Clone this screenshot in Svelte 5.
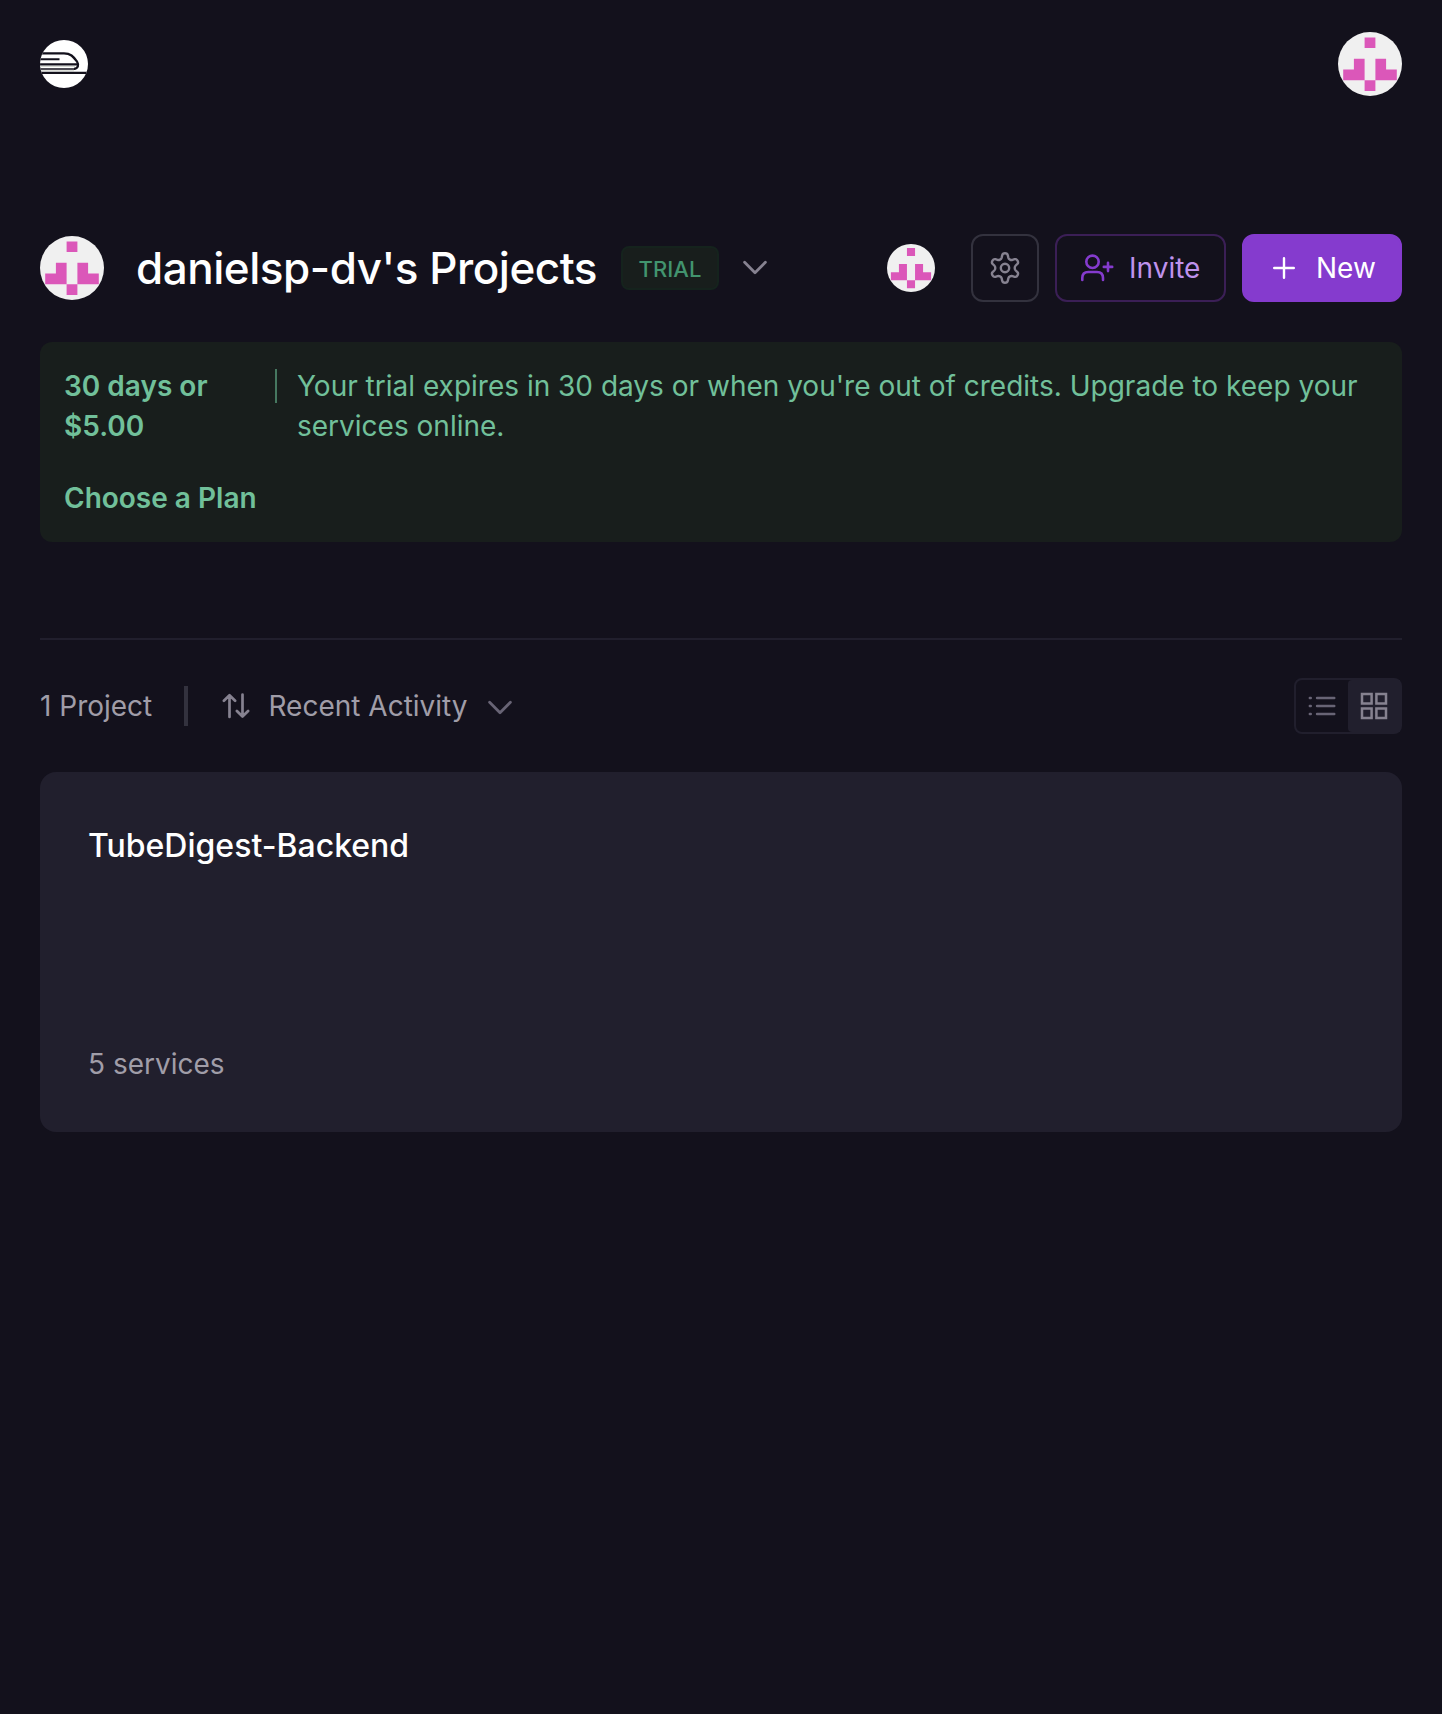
<svelte:options runes={true} />

{#snippet identicon(size)}
  <svg class="avatar {size}" viewBox="0 0 64 64">
    <rect width="64" height="64" fill="#f0f0f0" />
    <path
      fill="#db57b9"
      d="M26.600 5.400H37.400V16.100H26.600ZM15.900 26.800H26.600V48.200H5.200V37.500H15.900ZM37.400 26.800H48.100V37.500H58.800V48.200H37.400ZM26.600 48.200H37.400V58.900H26.600Z"
    />
  </svg>
{/snippet}

<div class="page">
  <header>
    <svg class="logo" viewBox="0 0 48 48">
      <defs><clipPath id="disc"><circle cx="24" cy="24" r="24" /></clipPath></defs>
      <g clip-path="url(#disc)" fill="none" stroke="#13111c">
        <rect width="48" height="48" fill="#fff" stroke="none" />
        <path d="M0 26.500H35M0 30.700H34" stroke="#d5d9d2" stroke-width="1" />
        <path d="M0 13.300H24C31 13.300 33.500 17 37 21.500C39.200 25 38 28.800 34 28.800" stroke-width="2.300" />
        <path d="M0 19.300H19.500" stroke-width="2" />
        <path d="M0 24.300H37.500" stroke-width="2.200" />
        <path d="M0 29H35" stroke-width="1.500" />
        <path d="M0 32.900H48" stroke-width="2.100" />
      </g>
    </svg>
    {@render identicon('large')}
  </header>

  <section class="title-row">
    {@render identicon('large')}
    <h1>danielsp-dv's Projects</h1>
    <span class="badge">TRIAL</span>
    <svg class="chevron" viewBox="0 0 26 16"><path d="M2.600 2.300L13 12.700L23.400 2.300" /></svg>
    <div class="actions">
      {@render identicon('small')}
      <button class="settings" aria-label="Settings">
        <svg width="32" height="34" viewBox="0 0 32 34">
          <path d="M13.200 4.200Q13.600 2.200 16 2.200Q18.400 2.200 18.800 4.200L19.300 6.600Q19.700 8 21 8.600Q22.200 9.300 23.500 8.900L25.600 8.200Q27.400 7.700 28.500 9.600Q29.700 11.600 28.400 12.900L26.700 14.500Q25.700 15.500 25.700 17Q25.700 18.500 26.700 19.500L28.400 21.100Q29.700 22.400 28.500 24.400Q27.400 26.300 25.600 25.800L23.500 25.100Q22.200 24.700 21 25.400Q19.700 26 19.300 27.400L18.800 29.800Q18.400 31.800 16 31.800Q13.600 31.800 13.200 29.800L12.700 27.400Q12.300 26 11 25.400Q9.800 24.700 8.500 25.100L6.400 25.800Q4.600 26.300 3.500 24.400Q2.300 22.400 3.600 21.100L5.300 19.500Q6.300 18.500 6.300 17Q6.300 15.500 5.300 14.500L3.600 12.900Q2.300 11.600 3.500 9.600Q4.600 7.700 6.400 8.200L8.500 8.900Q9.800 9.300 11 8.600Q12.300 8 12.700 6.600Z" />
          <circle cx="16" cy="17" r="4.200" />
        </svg>
      </button>
      <button class="invite">
        <svg width="34" height="28" viewBox="0 0 34 28">
          <circle cx="12.500" cy="7.800" r="6.200" />
          <path d="M2.300 26V24Q2.300 18 8.300 18H17Q23 18 23 24V26M28 8.700V17.100M23.800 12.900H32.200" />
        </svg>
        <span>Invite</span>
      </button>
      <button class="new">
        <svg width="22" height="22" viewBox="0 0 22 22"><path d="M11 1.200V20.800M1.200 11H20.800" /></svg>
        <span>New</span>
      </button>
    </div>
  </section>

  <section class="banner">
    <div class="notice">
      <strong>30 days or $5.00</strong>
      <i></i>
      <p>Your trial expires in 30 days or when you're out of credits. Upgrade to keep your services online.</p>
    </div>
    <strong>Choose a Plan</strong>
  </section>

  <hr />

  <section class="toolbar">
    <span class="count">1 Project</span>
    <i></i>
    <svg class="sort" viewBox="0 0 28 26">
      <path d="M7.500 24V2.500M1.900 7.700L7.500 2.200L13.100 7.700M20.500 1.500V23M14.900 18L20.500 23.500L26.100 18" />
    </svg>
    <span class="order">Recent Activity</span>
    <svg class="chevron dim" viewBox="0 0 26 16"><path d="M2.600 2.300L13 12.700L23.400 2.300" /></svg>
    <div class="views">
      <span class="view">
        <svg width="28" height="22" viewBox="0 0 28 22">
          <path d="M1.800 3H2.800M1.800 11H2.800M1.800 19H2.800M9 3H26.300M9 11H26.300M9 19H26.300" />
        </svg>
      </span>
      <span class="view active">
        <svg width="28" height="28" viewBox="0 0 28 28">
          <path d="M2 2H11.600V11.600H2ZM16.400 2H26V11.600H16.400ZM2 16.400H11.600V26H2ZM16.400 16.400H26V26H16.400Z" />
        </svg>
      </span>
    </div>
  </section>

  <article>
    <h2>TubeDigest-Backend</h2>
    <p>5 services</p>
  </article>
</div>

<style>
  :global(body) { background: #13111c; }
  * { box-sizing: border-box; }
  .page {
    min-height: 1714px;
    padding: 32px 40px;
    background: #13111c;
    color: #fff;
    font: 400 28px/40px Inter, "Liberation Sans", sans-serif;
  }
  h1, h2, p { margin: 0; font-weight: 500; }
  svg { display: block; flex: none; fill: none; stroke-linecap: round; stroke-linejoin: round; }
  header { display: flex; align-items: center; justify-content: space-between; height: 64px; }
  .logo { width: 48px; height: 48px; }
  .logo path { stroke-linecap: butt; }
  .avatar { border-radius: 50%; }
  .large { width: 64px; height: 64px; }
  .small { width: 48px; height: 48px; margin-right: 36px; }
  .title-row { display: flex; align-items: center; height: 68px; margin-top: 138px; }
  h1 { margin-left: 32px; width: 461px; font-size: 44px; line-height: 56px; letter-spacing: -.47px; white-space: nowrap; }
  .badge {
    width: 98px; height: 44px; margin-left: 24px;
    border: 2px solid #15231d; border-radius: 8px;
    background: #181e1c; color: #42946e;
    font-size: 22px; font-weight: 500; line-height: 42px; text-align: center; letter-spacing: .1px;
  }
  .chevron { width: 26px; height: 16px; margin-left: 23px; stroke: #868290; stroke-width: 2.8; }
  .actions { display: flex; align-items: center; margin-left: auto; }
  button {
    display: flex; align-items: center; height: 68px; padding: 0;
    border: 2px solid; border-radius: 12px; background: none;
    font: inherit; color: inherit;
  }
  .settings { justify-content: center; width: 68px; margin-right: 16px; border-color: #33323e; }
  .settings svg { stroke: #868290; stroke-width: 2.4; }
  .invite { width: 171px; margin-right: 16px; padding-left: 23px; border-color: #3b1f56; color: #bf92ec; }
  .invite svg { stroke: #853bce; stroke-width: 2.6; }
  .invite span { margin-left: 15px; }
  .new { width: 160px; padding-left: 29px; border-color: #853bce; background: #853bce; }
  .new svg { stroke: #fff; stroke-width: 2.4; }
  .new span { margin-left: 21px; }
  .banner {
    height: 200px; margin-top: 40px; padding: 24px;
    border-radius: 12px; background: #181e1c; color: #71c09a;
  }
  .notice { display: flex; height: 112px; }
  .notice strong { width: 160px; }
  .notice i { width: 2px; height: 34px; margin: 3px 20px 0 51px; background: #467860; }
  .notice p { flex: 1; font-weight: 400; }
  strong { display: block; font-weight: 600; }
  hr { height: 2px; margin: 96px 0 0; border: 0; background: #211f2d; }
  .toolbar { display: flex; align-items: center; height: 56px; margin-top: 38px; color: #a09da8; }
  .toolbar i { width: 4px; height: 40px; margin-right: 34px; background: #33323e; }
  .count { width: 144px; }
  .sort { width: 28px; height: 26px; margin-right: 18.5px; stroke: #868290; stroke-width: 2.7; }
  .order { width: 199.5px; }
  .dim { margin: 4px 0 0 19px; stroke: #686475; }
  .views { display: flex; width: 108px; height: 56px; margin-left: auto; border: 2px solid #211f2d; border-radius: 8px; }
  .view { display: flex; align-items: center; justify-content: center; width: 52px; }
  .view svg { stroke: #686475; stroke-width: 2.4; }
  .active { border-radius: 4px 0 0 4px; background: #211f2d; }
  .view.active svg { stroke: #868290; stroke-width: 2.5; stroke-linejoin: miter; }
  article {
    display: flex; flex-direction: column; justify-content: space-between;
    height: 360px; margin-top: 38px; padding: 52px 48px 48px;
    border-radius: 16px; background: #211f2d;
  }
  h2 { font-size: 32px; line-height: 44px; }
  article p { font-weight: 400; color: #a09da8; }
</style>
